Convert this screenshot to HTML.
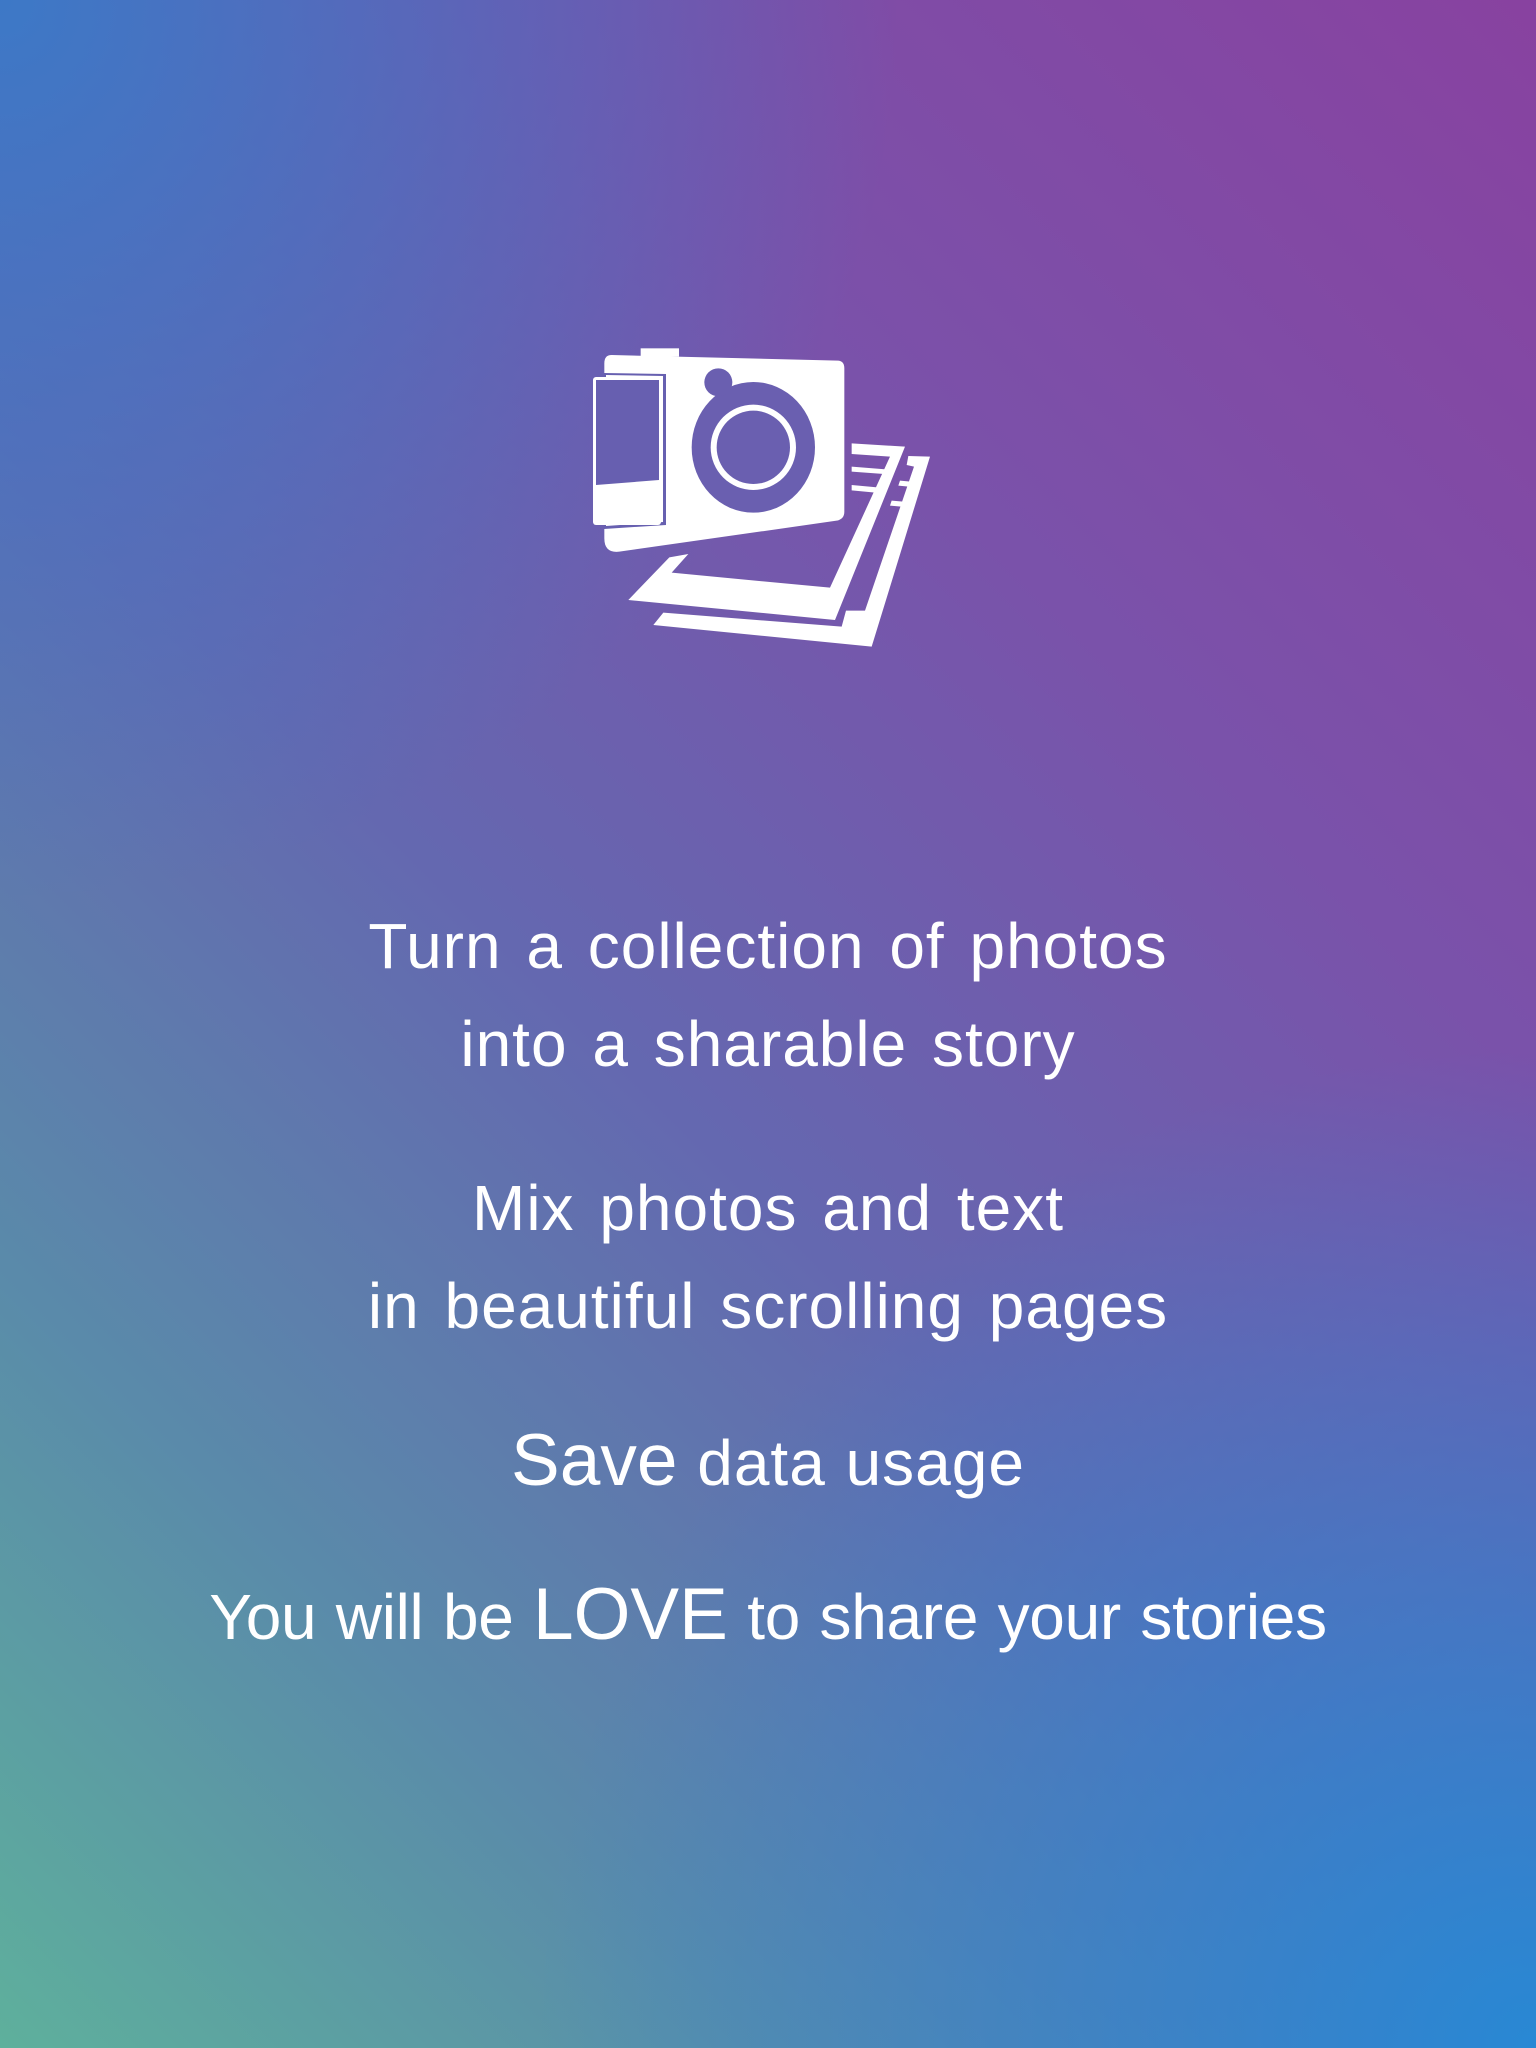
<!DOCTYPE html>
<html><head><meta charset="utf-8">
<style>
html,body{margin:0;padding:0}
body{width:1536px;height:2048px;position:relative;overflow:hidden;
background:
radial-gradient(ellipse 900px 900px at 0% 0%, rgba(58,122,200,0.95), rgba(58,122,200,0) 100%),
radial-gradient(ellipse 1000px 1000px at 100% 100%, rgba(40,136,212,1), rgba(40,136,212,0) 100%),
linear-gradient(225deg,#8842a0 0%,#7a52aa 30%,#6468b0 55%,#5a8aaa 78%,#5eb09c 100%);
font-family:"Liberation Sans",sans-serif;color:#fff}
.l{position:absolute;left:0;width:1536px;text-align:center;font-size:64px;line-height:1;letter-spacing:1px;word-spacing:6px;white-space:nowrap}
.big{font-size:73px;letter-spacing:0}
</style></head><body>
<svg width="1536" height="2048" style="position:absolute;left:0;top:0">
<g transform="translate(560,330) scale(0.33333)" fill="#fff">
<polygon points="205,810 328,682 385,672 335,728 810,773 990,380 875,372 875,340 1035,350 825,870"/>
<polygon points="280,885 310,848 845,890 858,842 915,842 1062,410 1040,405 1045,378 1110,380 935,950"/>
<path d="M155,75 L835,92 Q853,94 853,115 L853,545 Q853,568 830,572 L178,665 Q133,670 133,625 L133,100 Q133,75 155,75 Z"/>
<rect x="242" y="55" width="115" height="25"/>
<ellipse cx="580" cy="352" rx="185" ry="196" fill="#6a5fb0"/>
<circle cx="475" cy="157" r="42" fill="#6a5fb0"/>
<circle cx="580" cy="352" r="128" fill="#fff"/>
<circle cx="580" cy="352" r="110" fill="#6a5fb0"/>
<polygon points="875,410 978,418 972,432 875,425"/>
<polygon points="875,465 952,472 946,488 875,481"/>
<polygon points="1020,452 1052,455 1046,470 1015,467"/>
<polygon points="995,512 1030,515 1024,530 990,527"/>
</g>
<polygon points="604,373 666,374 666,525 604,529" fill="#6760b0"/>
<polygon points="606,375 663,376 663,522 606,526" fill="#fff"/>
<rect x="593" y="377" width="68" height="148" rx="3" fill="#fff"/>
<polygon points="596,380 659,380 659,480 596,485" fill="#675fb0"/>
</svg>
<div class="l" style="top:914px">Turn a collection of photos</div>
<div class="l" style="top:1012px">into a sharable story</div>
<div class="l" style="top:1176px">Mix photos and text</div>
<div class="l" style="top:1274px">in beautiful scrolling pages</div>
<div class="l" style="top:1424px;word-spacing:1px"><span class="big">Save</span> data usage</div>
<div class="l" style="top:1578px;letter-spacing:-0.3px;word-spacing:2px">You will be <span class="big">LOVE</span> to share your stories</div>
</body></html>
